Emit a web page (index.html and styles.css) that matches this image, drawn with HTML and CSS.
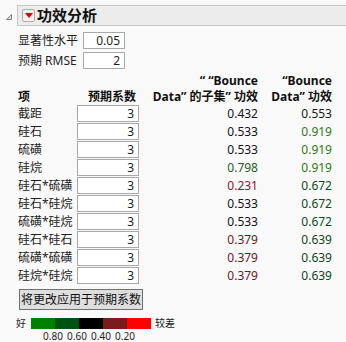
FILE: index.html
```html
<!DOCTYPE html>
<html lang="zh-CN">
<head>
  <meta charset="UTF-8" />
  <title>功效分析</title>
  <link rel="stylesheet" href="styles.css">
</head>
<body>

  <div class="outline">
    <svg class="disclosure" width="8" height="8" viewBox="0 0 8 8">
      <polygon points="6.5,1.5 6.5,6.5 1.5,6.5" fill="#e0e0e0" stroke="#808080" stroke-width="1" />
    </svg>
    <div class="outline-title">
      <span class="menu-btn">
        <svg width="8" height="5" viewBox="0 0 8 5"><polygon points="0,0 8,0 4,5" fill="#e00000" /></svg>
      </span>
      <span class="title">功效分析</span>
    </div>
  </div>

  <div class="content">
    <div class="params">
      <label>显著性水平</label>
      <div class="box">0.05</div>
      <label>预期 RMSE</label>
      <div class="box">2</div>
    </div>

    <table class="power">
      <thead>
        <tr>
          <th class="term">项</th>
          <th class="num">预期系数</th>
          <th class="num">“ “Bounce<br>Data” 的子集” 功效</th>
          <th class="num">“Bounce<br>Data” 功效</th>
        </tr>
      </thead>
      <tbody>
        <tr><td>截距</td><td><div class="box">3</div></td><td class="v" style="color:#141420">0.432</td><td class="v" style="color:#0c1c10">0.553</td></tr>
        <tr><td>硅石</td><td><div class="box">3</div></td><td class="v" style="color:#101018">0.533</td><td class="v" style="color:#2a7d10">0.919</td></tr>
        <tr><td>硫磺</td><td><div class="box">3</div></td><td class="v" style="color:#101018">0.533</td><td class="v" style="color:#2a7d10">0.919</td></tr>
        <tr><td>硅烷</td><td><div class="box">3</div></td><td class="v" style="color:#1c5e24">0.798</td><td class="v" style="color:#2a7d10">0.919</td></tr>
        <tr><td>硅石*硫磺</td><td><div class="box">3</div></td><td class="v" style="color:#8a1430">0.231</td><td class="v" style="color:#0c4a1e">0.672</td></tr>
        <tr><td>硅石*硅烷</td><td><div class="box">3</div></td><td class="v" style="color:#101018">0.533</td><td class="v" style="color:#0c4a1e">0.672</td></tr>
        <tr><td>硫磺*硅烷</td><td><div class="box">3</div></td><td class="v" style="color:#101018">0.533</td><td class="v" style="color:#0c4a1e">0.672</td></tr>
        <tr><td>硅石*硅石</td><td><div class="box">3</div></td><td class="v" style="color:#701424">0.379</td><td class="v" style="color:#104624">0.639</td></tr>
        <tr><td>硫磺*硫磺</td><td><div class="box">3</div></td><td class="v" style="color:#701424">0.379</td><td class="v" style="color:#104624">0.639</td></tr>
        <tr><td>硅烷*硅烷</td><td><div class="box">3</div></td><td class="v" style="color:#701424">0.379</td><td class="v" style="color:#104624">0.639</td></tr>
      </tbody>
    </table>

    <button class="apply">将更改应用于预期系数</button>

    <div class="legend">
      <span class="good">好</span>
      <div class="scale">
        <span class="seg s1"></span>
        <span class="seg s2"></span>
        <span class="seg s3"></span>
        <span class="seg s4"></span>
        <span class="seg s5"></span>
      </div>
      <span class="bad">较差</span>
    </div>
    <div class="ticks">
      <span>0.80</span>
      <span>0.60</span>
      <span>0.40</span>
      <span>0.20</span>
    </div>
  </div>

</body>
</html>
```

FILE: styles.css
```css
body {
  margin: 0;
  background: #f9f9f9;
  font-family: "Noto Sans", "Noto Sans CJK SC", sans-serif;
  font-size: 12px;
  color: #1e1e1e;
}

.outline {
  display: flex;
  align-items: center;
  padding-top: 5px;
}

.disclosure {
  margin-left: 5px;
  margin-right: 4px;
  margin-top: 3px;
}

.outline-title {
  flex: 1;
  display: flex;
  align-items: center;
  height: 19px;
  background: #ececec;
  border: 1px solid #c6c6c6;
  border-right: none;
}

.menu-btn {
  display: flex;
  align-items: center;
  justify-content: center;
  width: 11px;
  height: 11px;
  margin-left: 4px;
  border: 1px solid #b8a8a8;
  border-radius: 2px;
  background: #f6f0f0;
}

.title {
  margin-left: 2px;
  font-size: 15px;
  font-weight: bold;
  line-height: 19px;
  color: #111;
}

.content {
  padding-left: 18px;
}

.params {
  display: grid;
  grid-template-columns: 65px 42px;
  row-gap: 3px;
  margin-top: 6px;
  line-height: 17px;
}

.box {
  height: 15px;
  border: 1px solid #a8a8a8;
  background: #fff;
  text-align: right;
  padding-right: 4px;
  line-height: 15px;
}

.power {
  border-collapse: collapse;
  table-layout: fixed;
  width: 314px;
  margin-top: 4px;
}

.power th {
  padding: 0;
  font-weight: bold;
  line-height: 16px;
  vertical-align: bottom;
  white-space: nowrap;
  color: #111;
}

.power th.term {
  width: 59px;
  text-align: left;
}

.power th.num {
  text-align: right;
}

.power th:nth-child(2) {
  width: 62px;
  padding-right: 3px;
  box-sizing: border-box;
}

.power th:nth-child(3) {
  width: 119px;
}

.power th:nth-child(4) {
  width: 74px;
}

.power td {
  padding: 0;
  height: 18px;
  line-height: 17px;
  vertical-align: top;
  white-space: nowrap;
}

.power td .box {
  margin-bottom: 1px;
}

.power td.v {
  text-align: right;
}

.apply {
  display: block;
  margin-top: 4px;
  margin-left: 1px;
  height: 21px;
  padding: 0 1px;
  background: #dedede;
  border: 1px solid #707070;
  font-family: inherit;
  font-size: 12px;
  line-height: 18px;
  color: #111;
}

.legend {
  display: flex;
  align-items: center;
  margin-top: 8px;
  margin-left: -2px;
  font-size: 10px;
  line-height: 11px;
}

.good {
  width: 15px;
}

.scale {
  display: flex;
  height: 11px;
}

.seg {
  width: 24px;
}

.s1 { background: #008000; }
.s2 { background: #005212; }
.s3 { background: #000000; }
.s4 { background: #7a1c1c; }
.s5 { background: #ff0000; }

.bad {
  margin-left: 4px;
}

.ticks {
  display: flex;
  margin-left: 23px;
  margin-top: 1px;
  font-size: 10px;
  line-height: 13px;
}

.ticks span {
  width: 24px;
  text-align: center;
}
```
